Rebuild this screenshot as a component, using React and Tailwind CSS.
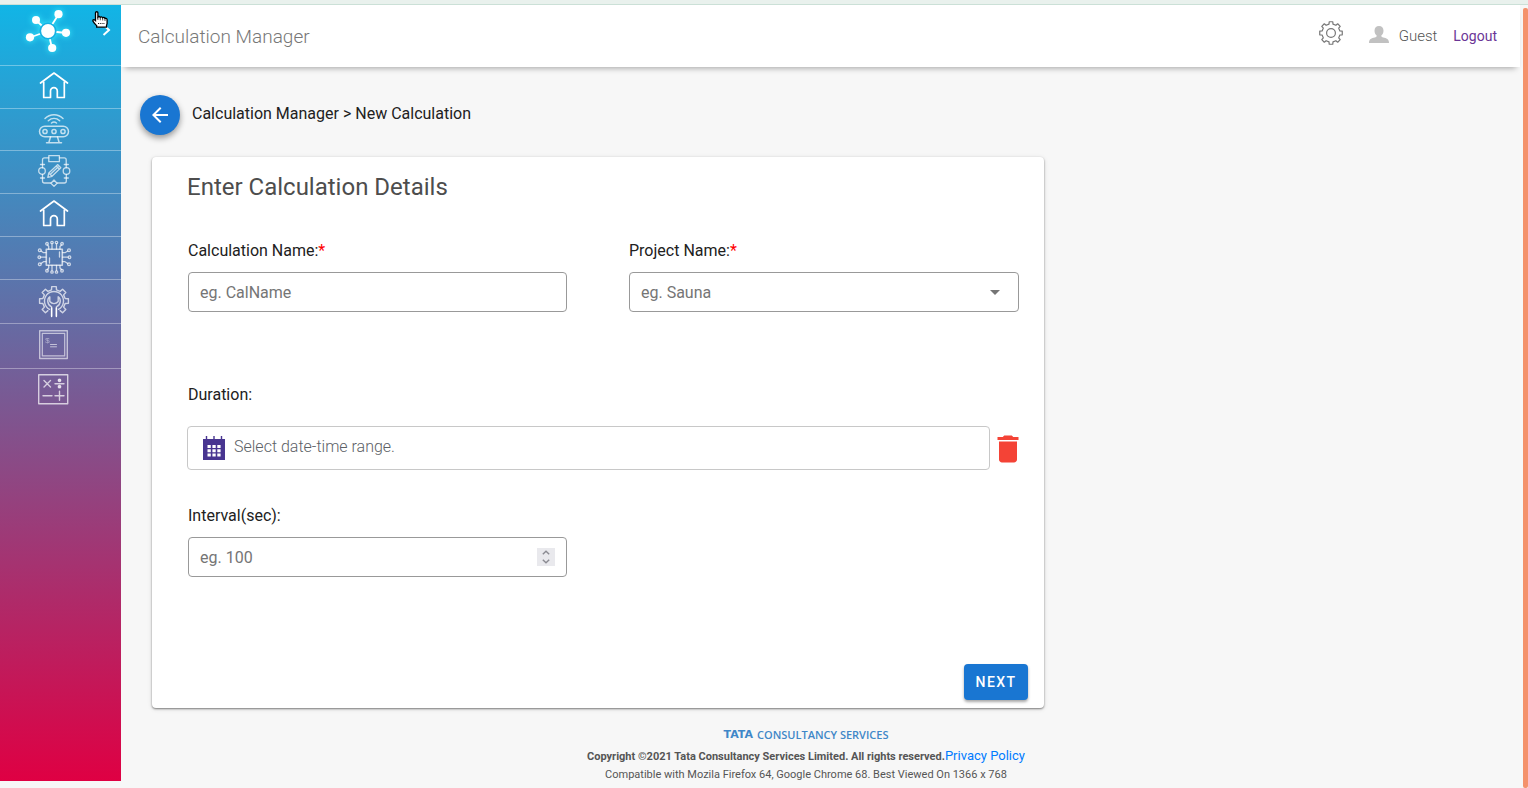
import React from "react";

const roboto = "font-['Roboto',sans-serif]";

/* Outline of a cog wheel around (c, c). */
function cogPath(c, teeth, outer, inner, from = 0, to = teeth) {
  const step = (Math.PI * 2) / teeth;
  const pts = [];
  for (let i = from; i < to; i++) {
    const a = i * step - Math.PI / 2;
    [
      [-0.28, inner],
      [-0.2, outer],
      [0.2, outer],
      [0.28, inner],
    ].forEach(([k, r]) => {
      pts.push(
        (c + Math.cos(a + k * step) * r).toFixed(2) +
          " " +
          (c + Math.sin(a + k * step) * r).toFixed(2)
      );
    });
  }
  return "M" + pts.join("L");
}

function Icon({ children, size = "size-8", width = 1.3 }) {
  return (
    <svg
      viewBox="0 0 32 32"
      className={size + " block overflow-visible"}
      fill="none"
      stroke="currentColor"
      strokeWidth={width}
      strokeLinecap="round"
      strokeLinejoin="round"
      aria-hidden="true"
    >
      {children}
    </svg>
  );
}

function HomeIcon() {
  return (
    <Icon width={1.7}>
      <path d="M2.500 13 16 3l13.500 10" />
      <path d="M5.700 12v15.500h6.800V21a3.400 3.400 0 0 1 6.800 0v6.500h7V12" />
    </Icon>
  );
}

function SensorIcon() {
  return (
    <Icon width={1.5}>
      <path d="M7 5.500c5-5 13-5 18 0M10.300 7.800c3.400-3 8-3 11.400 0M13.500 10c1.500-1.200 3.500-1.200 5 0" />
      <rect x="1.500" y="13.200" width="29" height="10.600" rx="5.300" />
      <circle cx="7" cy="18.500" r="2.100" />
      <circle cx="16" cy="18.500" r="2.100" />
      <circle cx="25" cy="18.500" r="2.100" />
      <path d="M12.500 24l-1.500 5M19.500 24l1.500 5M8.500 29.800h15" />
    </Icon>
  );
}

function FlowIcon() {
  return (
    <Icon width={1.3}>
      <rect x="10.800" y="0.700" width="10.600" height="6" />
      <path d="M10.800 2.800H6.500a2 2 0 0 0-2 2v8M21.400 2.800h4.800a2 2 0 0 1 2 2v8M4.500 19.500V26a2 2 0 0 0 2 2H13M28.300 19.500V26a2 2 0 0 1-2 2H19" />
      <circle cx="4" cy="16" r="3.300" />
      <circle cx="28.500" cy="16" r="3.300" />
      <path d="M16 25l3 3.200-3 3.200-3-3.200z" />
      <path d="M2.500 9.500h4M26.300 9.500h4M2.500 23h4M26.300 23h4" />
      <path d="M9.800 22.300l1-4.300 9-8.400 3 3.200-8.800 8.500zM10.800 18l3.200 3.300M18.300 11l3.200 3.300M12.700 19l7.400-7" />
    </Icon>
  );
}

function ChipIcon() {
  return (
    <Icon width={1.3}>
      <rect x="8.300" y="8.300" width="16" height="16" strokeWidth="1.600" />
      <path d="M14 8V3M18.500 8V3M14 24.500v5M18.500 24.500v5M10.700 8V5.500L9.500 4M22 8V5.500L23.500 4M10.700 24.500V27l-1.200 1.500M22 24.500V27l1.500 1.500" />
      <path d="M8 16.200H2.500M24.500 16.200H30M8 11.700H5.500L3 10M8 20.700H5.500L3 22.500M24.500 11.700H27l2.700-1.700M24.500 20.700H27l2.700 1.800" />
      <path d="M21.500 11v5M11.500 17v5" />
      <circle cx="9" cy="2.800" r="1.300" />
      <circle cx="14" cy="1.500" r="1.200" />
      <circle cx="18.500" cy="1.500" r="1.200" />
      <circle cx="24" cy="2.800" r="1.300" />
      <circle cx="9" cy="29.800" r="1.300" />
      <circle cx="14" cy="31" r="1.200" />
      <circle cx="18.500" cy="31" r="1.200" />
      <circle cx="24" cy="29.800" r="1.300" />
      <circle cx="1.800" cy="9.300" r="1.400" />
      <circle cx="1.300" cy="16.200" r="1.300" />
      <circle cx="1.800" cy="23.300" r="1.400" />
      <circle cx="31" cy="9.300" r="1.400" />
      <circle cx="31.500" cy="16.200" r="1.300" />
      <circle cx="31" cy="23.300" r="1.400" />
    </Icon>
  );
}

function MaintenanceIcon() {
  return (
    <Icon width={1.4}>
      <path d={cogPath(16, 8, 14.6, 11.4, -3, 4)} />
      <path d="M11.500 24.300a9.500 9.500 0 1 1 9 0" />
      <path d="M13.600 31V21.800c-5-2.500-4.600-8.100-1.800-10v4.700c2.200 2.800 6.200 2.800 8.400 0v-4.700c2.800 1.900 3.200 7.500-1.800 10V31" />
      <path d="M13.600 23v8.500M18.400 23v8.500" stroke="#fff" />
    </Icon>
  );
}

function TerminalIcon() {
  return (
    <Icon width={1.4}>
      <rect x="1.700" y="1.700" width="27.600" height="27.800" />
      <rect x="4.300" y="4.300" width="22.400" height="22.600" strokeWidth="1.200" />
      <text
        x="7"
        y="13.500"
        fontSize="8"
        fontFamily="Liberation Mono, monospace"
        fill="currentColor"
        stroke="none"
        opacity="0.8"
      >
        $
      </text>
      <path d="M12.500 15.500h6M12.500 17.800h6" strokeWidth="1" />
    </Icon>
  );
}

function CalculatorIcon() {
  return (
    <Icon width={1.4}>
      <rect x="0.700" y="1.700" width="29" height="29" />
      <path d="M6 7.500l6.500 6.500M12.500 7.500L6 14M17 10.700h9M5 22.700h9M17 22.700h9M21.500 18.200v9" />
      <circle cx="21.500" cy="7.300" r="1.200" fill="currentColor" />
      <circle cx="21.500" cy="13.700" r="1.200" fill="currentColor" />
    </Icon>
  );
}

function Logo() {
  return (
    <svg viewBox="0 0 48 48" className="size-12 block drop-shadow-[0_0_3px_#3df0ff]" aria-hidden="true">
      <g stroke="#fff" strokeWidth="1.8">
        <path d="M24 24 11.500 13M24 24 34.500 7.500M24 24 42 26M24 24 6 30.500M24 24 28 41" />
      </g>
      <circle cx="24" cy="24" r="8.600" fill="#16b0e2" />
      <g fill="#fff">
        <circle cx="24" cy="24" r="6.900" />
        <circle cx="12" cy="13" r="4" />
        <circle cx="34.500" cy="7.200" r="4.100" />
        <circle cx="42" cy="25.800" r="4.100" />
        <circle cx="6" cy="30.300" r="4.100" />
        <circle cx="28.200" cy="41" r="4.100" />
      </g>
    </svg>
  );
}

function HandPointer() {
  return (
    <svg viewBox="0 0 17 18" className="pointer-events-none absolute top-[6px] left-[92px] h-[18px] w-[17px]" aria-hidden="true">
      <path
        d="M3.500 1.800c0-1.400 2.400-1.400 2.400 0V6c.6-.8 2-.6 2.300.3.700-.8 2-.5 2.400.4.800-.6 2-.2 2.300.7 1.100-.5 2.200.2 2.200 1.400v3.400c0 1-.6 1.800-.6 2.600v1.400H4.700v-1.400C3.600 13.600 1.600 11.500 1 10.200c-.5-1.100.8-2 1.700-1.300l.8.700z"
        fill="#fff"
        stroke="#000"
        strokeWidth="1.300"
      />
      <path d="M5.900 6v3M8.300 6.500v2.800M10.700 7v2.500M13 7.500v2.500" stroke="#000" strokeWidth="0.700" />
      <path d="M6 12.500h7" stroke="#000" strokeWidth="0.900" strokeDasharray="1.200 1" />
    </svg>
  );
}

const navItems = [
  { label: "Home", Glyph: HomeIcon, tone: "text-white", row: "h-[43px]" },
  { label: "Sensors", Glyph: SensorIcon, tone: "text-white/70", row: "h-[42px]" },
  { label: "Workflow", Glyph: FlowIcon, tone: "text-white/70", row: "h-[43px]" },
  { label: "Assets", Glyph: HomeIcon, tone: "text-white", row: "h-[43px]" },
  { label: "Devices", Glyph: ChipIcon, tone: "text-white/70", row: "h-[43px]" },
  { label: "Maintenance", Glyph: MaintenanceIcon, tone: "text-white/70", row: "h-11" },
  { label: "Console", Glyph: TerminalIcon, tone: "text-white/60", row: "h-[45px]" },
  { label: "Calculations", Glyph: CalculatorIcon, tone: "text-white/70", row: "h-[42px]" },
];

function Sidebar() {
  return (
    <nav className="relative mb-[7px] w-[121px] shrink-0 bg-linear-to-b/srgb from-[#11b5e6] to-[#df0043]">
      <div className="flex h-[60px] items-start pl-6 pt-[2px]">
        <Logo />
        <button type="button" aria-label="Expand menu" className="ml-7 mt-4 text-white">
          <svg viewBox="0 0 12 14" className="h-[14px] w-3" fill="none" stroke="currentColor" strokeWidth="2" aria-hidden="true">
            <path d="M3.500 2 9 7l-5.500 5" />
          </svg>
        </button>
      </div>
      <ul>
        {navItems.map(({ label, Glyph, tone, row }) => (
          <li key={label} className={row + " border-t border-white/35"}>
            <a href="#" aria-label={label} className={tone + " flex h-full items-center pb-0.5 pl-[38px]"}>
              <Glyph />
            </a>
          </li>
        ))}
      </ul>
      <HandPointer />
    </nav>
  );
}

function Header() {
  return (
    <header className="flex h-[62px] items-center bg-white pl-[17px] pr-[23px] shadow-[0_5px_6px_-4px_rgba(0,0,0,0.35)]">
      <h1 className="flex-1 pt-px text-[19px] leading-6 font-light text-[#777]">Calculation Manager</h1>
      <button type="button" aria-label="Settings" className="mb-[7px] mr-[26px] text-[#777]">
        <svg viewBox="0 0 24 24" className="block size-6" fill="none" stroke="currentColor" strokeWidth="1.2" strokeLinejoin="round" aria-hidden="true">
          <path d={cogPath(12, 8, 11.4, 9.1) + "Z"} />
          <circle cx="12" cy="12" r="4.400" />
        </svg>
      </button>
      <svg viewBox="0 0 20 17" className="mb-1 mr-[10px] h-[17px] w-5" fill="#c1c1c1" aria-hidden="true">
        <path d="M10 0c2.800 0 4.500 2 4.500 4.800 0 2.200-1 4-2.300 5 .2 1 .8 1.400 2 1.700 3.200.8 5.800 1.300 5.800 5.500H0c0-4.200 2.600-4.700 5.800-5.500 1.200-.3 1.800-.7 2-1.700-1.300-1-2.300-2.800-2.300-5C5.500 2 7.200 0 10 0z" />
      </svg>
      <span className="mr-4 text-[15px] leading-5 font-light text-[#555]">Guest</span>
      <a href="#" className="text-sm leading-5 text-[#6b3596]">Logout</a>
    </header>
  );
}

const fieldClass =
  "h-10 w-full rounded border border-[#999] bg-white px-[11px] text-base text-[#757575] placeholder:text-[#757575] outline-none";

function Label({ htmlFor, required, children }) {
  return (
    <label htmlFor={htmlFor} className="block text-base leading-6 text-[#212121]">
      {children}
      {required && <span className="text-[#f00]">*</span>}
    </label>
  );
}

function NumberStepper() {
  return (
    <div className="absolute top-[11px] right-3 flex w-[18px] flex-col bg-[#e9e9ed] text-[#8b8b92]">
      <button type="button" aria-label="Increase" className="flex h-[9px] items-center justify-center">
        <svg viewBox="0 0 8 5" className="h-[5px] w-2" fill="none" stroke="currentColor" strokeWidth="1.4" aria-hidden="true">
          <path d="M.8 4.300 4 1.200l3.200 3.100" />
        </svg>
      </button>
      <button type="button" aria-label="Decrease" className="flex h-[9px] items-center justify-center">
        <svg viewBox="0 0 8 5" className="h-[5px] w-2" fill="none" stroke="currentColor" strokeWidth="1.4" aria-hidden="true">
          <path d="M.8.700 4 3.800 7.200.700" />
        </svg>
      </button>
    </div>
  );
}

function CalculationForm() {
  return (
    <form
      onSubmit={(e) => e.preventDefault()}
      className="w-full max-w-[892px] rounded bg-white pt-[14px] pb-2 shadow-[0_1px_2px_rgba(0,0,0,0.45),0_1px_5px_rgba(0,0,0,0.12)]"
    >
      <h2 className="pl-[35px] text-2xl leading-8 text-[#4d4d4d]">Enter Calculation Details</h2>

      <div className="mt-9 grid grid-cols-[379fr_390fr] gap-x-[62px] pl-9 pr-[25px]">
        <div className="flex flex-col gap-[9px]">
          <Label htmlFor="calc-name" required>Calculation Name:</Label>
          <input id="calc-name" type="text" placeholder="eg. CalName" className={fieldClass} />
        </div>
        <div className="flex flex-col gap-[9px]">
          <Label htmlFor="project-name" required>Project Name:</Label>
          <div className="relative">
            <select id="project-name" className={fieldClass + " appearance-none pt-0.5"}>
              <option>eg. Sauna</option>
            </select>
            <svg viewBox="0 0 10 5" className="pointer-events-none absolute top-[18px] right-[19px] h-[5px] w-[10px]" fill="#757575" aria-hidden="true">
              <path d="M0 0h10L5 5z" />
            </svg>
          </div>
        </div>
      </div>

      <div className="mt-[71px] pl-9">
        <Label htmlFor="duration">Duration:</Label>
      </div>
      <div className="mt-[19px] flex items-center pl-[35px] pr-[18px]">
        <div className="flex h-11 flex-1 items-center rounded border border-[#c8c8c8] pl-[15px]">
          <svg viewBox="0 0 22 24" className="h-6 w-[22px]" aria-hidden="true">
            <path d="M0 3h22v21H0z" fill="#483590" />
            <path d="M3.500 0v4M11 0v4M18.500 0v4" stroke="#483590" strokeWidth="1.400" />
            <path
              d="M4.500 9h3.300v3H4.500zM9.400 9h3.300v3H9.400zM14.300 9h3.300v3h-3.300zM4.500 13.300h3.300v3H4.500zM9.400 13.300h3.300v3H9.400zM14.300 13.300h3.300v3h-3.300zM4.500 17.600h3.300v3H4.500zM9.400 17.600h3.300v3H9.400zM14.300 17.600h3.300v3h-3.300z"
              fill="#fff"
            />
          </svg>
          <input
            id="duration"
            type="text"
            placeholder="Select date-time range."
            className="mb-[3px] ml-[9px] h-6 min-w-0 flex-1 text-base font-light outline-none placeholder:text-[#5c6166]"
          />
        </div>
        <button type="button" aria-label="Clear duration" className="pt-px text-[#f44336]">
          <svg viewBox="0 0 24 24" className="block size-9" fill="currentColor" aria-hidden="true">
            <path d="M6 19c0 1.100.9 2 2 2h8c1.100 0 2-.9 2-2V7H6v12zM19 4h-3.500l-1-1h-5l-1 1H5v2h14V4z" />
          </svg>
        </button>
      </div>

      <div className="mt-[34px] grid grid-cols-[379fr_390fr] gap-x-[62px] pl-9 pr-[25px]">
        <div className="flex flex-col gap-[9px]">
          <Label htmlFor="interval">Interval(sec):</Label>
          <div className="relative">
            <input
              id="interval"
              type="number"
              placeholder="eg. 100"
              className={
                fieldClass +
                " [appearance:textfield] [&::-webkit-inner-spin-button]:appearance-none [&::-webkit-outer-spin-button]:appearance-none"
              }
            />
            <NumberStepper />
          </div>
        </div>
      </div>

      <div className="mt-[87px] flex justify-end pr-4">
        <button
          type="submit"
          className="h-9 w-16 rounded bg-[#1976d2] text-sm font-medium tracking-widest text-white shadow-[0_2px_3px_rgba(0,0,0,0.35)]"
        >
          NEXT
        </button>
      </div>
    </form>
  );
}

function Footer() {
  return (
    <footer className="mt-[19px] flex flex-col items-center pr-[29px] text-[#555]">
      <div className="flex h-[15px] items-center gap-1 text-[11px] leading-none text-[#3f87c8]">
        <span className="font-['DejaVu_Sans',sans-serif] font-bold">TATA</span>
        <span className="font-['Open_Sans',sans-serif] font-semibold">CONSULTANCY SERVICES</span>
      </div>
      <p className="mt-1 text-[11px] leading-5 font-bold">
        Copyright ©2021 Tata Consultancy Services Limited. All rights reserved.
        <a href="#" className="text-[13px] font-normal text-[#007bff]">Privacy Policy</a>
      </p>
      <p className="text-[11px] leading-4">
        Compatible with Mozila Firefox 64, Google Chrome 68. Best Viewed On 1366 x 768
      </p>
    </footer>
  );
}

export default function App() {
  return (
    <div className={roboto + " flex min-h-screen flex-col bg-[#f7f7f7]"}>
      <div className="h-[5px] border-b border-[#cbe0d7] bg-[#e9f1ed]" />
      <div className="flex flex-1">
        <Sidebar />
        <div className="flex min-w-0 flex-1 flex-col">
          <Header />
          <main className="pt-7">
            <div className="flex items-center gap-3 pl-[19px]">
              <button
                type="button"
                aria-label="Back"
                className="flex size-10 items-center justify-center rounded-full bg-[#1976d2] text-white shadow-[0_3px_6px_rgba(0,0,0,0.4)]"
              >
                <svg viewBox="0 0 24 24" className="size-6" fill="currentColor" aria-hidden="true">
                  <path d="M20 11H7.830l5.590-5.590L12 4l-8 8 8 8 1.410-1.410L7.830 13H20v-2z" />
                </svg>
              </button>
              <p className="mb-0.5 text-base leading-6 text-[#212121]">Calculation Manager &gt; New Calculation</p>
            </div>
            <div className="mt-[22px] pl-[31px] pr-4">
              <CalculationForm />
            </div>
          </main>
          <Footer />
        </div>
        <div className="flex w-2 shrink-0 pl-[3px] pt-[3px]">
          <div className="flex-1 rounded-[2px] bg-[#f4926c]" />
        </div>
      </div>
    </div>
  );
}
